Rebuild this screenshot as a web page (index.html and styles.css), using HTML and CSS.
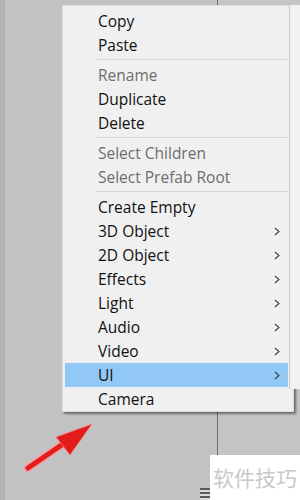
FILE: index.html
```html
<!DOCTYPE html>
<html lang="en">
<head>
    <meta charset="UTF-8">
    <title>Context Menu</title>
    <link rel="stylesheet" href="styles.css">
</head>
<body>
    <div class="scene">
        <!-- Paneles de fondo -->
        <div class="panel-left"></div>
        <div class="panel-right"></div>

        <!-- Submenú detrás -->
        <div class="submenu-edge"></div>

        <!-- Menú contextual -->
        <div class="menu">
            <div class="menu-item">Copy</div>
            <div class="menu-item">Paste</div>
            <div class="separator"></div>
            <div class="menu-item disabled">Rename</div>
            <div class="menu-item">Duplicate</div>
            <div class="menu-item">Delete</div>
            <div class="separator"></div>
            <div class="menu-item disabled">Select Children</div>
            <div class="menu-item disabled">Select Prefab Root</div>
            <div class="separator"></div>
            <div class="menu-item">Create Empty</div>
            <div class="menu-item has-sub">3D Object<svg class="chevron" viewBox="0 0 6 9"><path d="M1 1 L5 4.5 L1 8"/></svg></div>
            <div class="menu-item has-sub">2D Object<svg class="chevron" viewBox="0 0 6 9"><path d="M1 1 L5 4.5 L1 8"/></svg></div>
            <div class="menu-item has-sub">Effects<svg class="chevron" viewBox="0 0 6 9"><path d="M1 1 L5 4.5 L1 8"/></svg></div>
            <div class="menu-item has-sub">Light<svg class="chevron" viewBox="0 0 6 9"><path d="M1 1 L5 4.5 L1 8"/></svg></div>
            <div class="menu-item has-sub">Audio<svg class="chevron" viewBox="0 0 6 9"><path d="M1 1 L5 4.5 L1 8"/></svg></div>
            <div class="menu-item has-sub">Video<svg class="chevron" viewBox="0 0 6 9"><path d="M1 1 L5 4.5 L1 8"/></svg></div>
            <div class="menu-item has-sub active">UI<svg class="chevron" viewBox="0 0 6 9"><path d="M1 1 L5 4.5 L1 8"/></svg></div>
            <div class="menu-item last">Camera</div>
        </div>

        <!-- Flecha roja -->
        <svg class="arrow" width="110" height="90" viewBox="0 0 110 90">
            <line x1="28" y1="68" x2="66" y2="42" stroke="#f2a0a0" stroke-width="8" stroke-linecap="round"/>
            <line x1="28" y1="68" x2="66" y2="42" stroke="#e41b1b" stroke-width="5" stroke-linecap="round"/>
            <polygon points="92,24 56,37 70,55" fill="#e41b1b" stroke="#f08080" stroke-width="0.8"/>
        </svg>

        <!-- Marca de agua -->
        <div class="watermark">
            <span class="wm-icon"></span>
            <span class="wm-text">软件技巧</span>
        </div>
    </div>
</body>
</html>
```

FILE: styles.css
```css
* {
    margin: 0;
    padding: 0;
    box-sizing: border-box;
}

body {
    width: 300px;
    height: 500px;
    overflow: hidden;
    background-color: #c3c3c3;
    font-family: 'Open Sans', 'Noto Sans', sans-serif;
}

.scene {
    position: relative;
    display: flex;
    width: 300px;
    height: 500px;
}

/* Paneles de fondo */
.panel-left {
    width: 218px;
    height: 100%;
    background-color: #c2c2c2;
    border-left: 5px solid #b2b2b2;
    border-right: 1px solid #6e6e6e;
}

.panel-right {
    flex: 1;
    background-color: #c4c4c4;
}

/* Borde del submenú */
.submenu-edge {
    position: absolute;
    left: 289px;
    top: 5px;
    width: 11px;
    height: 384px;
    background-color: #f1f1f1;
    border-left: 1px solid #c9c9c9;
    z-index: 2;
}

/* Menú contextual */
.menu {
    position: absolute;
    left: 62px;
    top: 5px;
    width: 232px;
    padding: 3px 5px 0 2px;
    background-color: #f0f0f0;
    border: 1px solid #dcdcdc;
    box-shadow: 2px 2px 2px rgba(0, 0, 0, 0.45);
    z-index: 1;
}

.menu-item {
    position: relative;
    height: 24px;
    line-height: 24px;
    padding-left: 33px;
    font-size: 15.5px;
    color: #111;
    white-space: nowrap;
}

.menu-item.disabled {
    color: #6d6d6d;
}

.menu-item.active {
    background-color: #92c8f5;
}

.menu-item.last {
    margin-right: -5px;
}

.chevron {
    position: absolute;
    right: 8px;
    top: 8px;
    width: 6px;
    height: 9px;
    fill: none;
    stroke: #3c3c3c;
    stroke-width: 1.1;
}

.separator {
    height: 6px;
    margin-left: 31px;
    padding-top: 2px;
}

.separator::before {
    content: '';
    display: block;
    height: 1px;
    background-color: #d4d4d4;
}

/* Flecha roja */
.arrow {
    position: absolute;
    left: 0;
    top: 400px;
    z-index: 3;
}

/* Marca de agua */
.watermark {
    position: absolute;
    left: 200px;
    top: 455px;
    width: 100px;
    height: 45px;
    display: flex;
    align-items: flex-end;
}

.wm-icon {
    width: 10px;
    height: 12px;
    background: repeating-linear-gradient(#5a5a5a 0 2px, #d8d8d8 2px 4px);
}

.wm-text {
    flex: 1;
    height: 45px;
    line-height: 45px;
    background-color: #ffffff;
    padding-left: 3px;
    font-family: 'Noto Sans CJK SC', sans-serif;
    font-size: 21px;
    color: #c9c9c9;
}
```
